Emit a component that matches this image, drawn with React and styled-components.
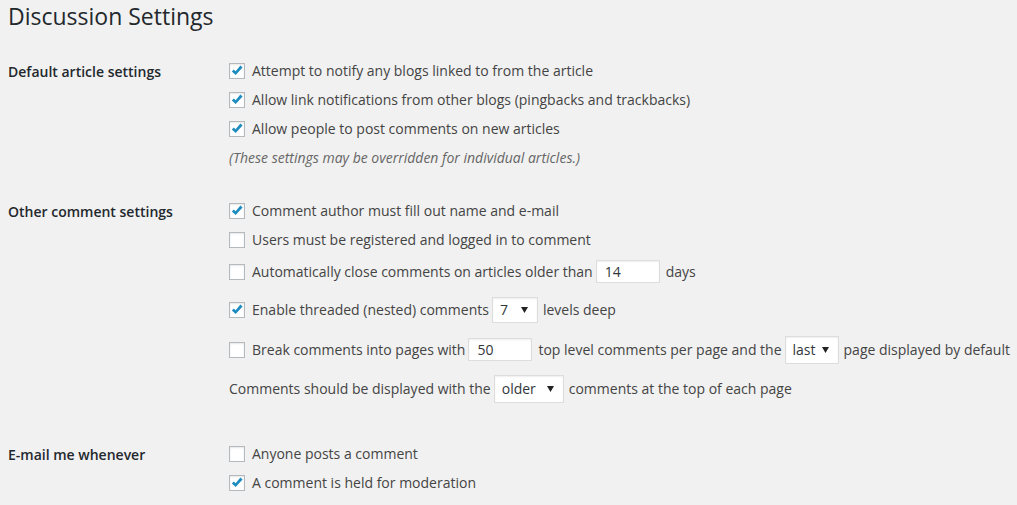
import React from "react";
import styled, { createGlobalStyle } from "styled-components";

const GlobalStyle = createGlobalStyle`
  html, body {
    margin: 0;
    padding: 0;
    background: #f1f1f1;
  }
  body {
    font-family: "Open Sans", "Liberation Sans", sans-serif;
    font-size: 14px;
    color: #444;
  }
`;

const Wrap = styled.div`
  padding: 0 8px;
  width: 1017px;
  box-sizing: border-box;
`;

const Title = styled.h1`
  margin: 0;
  padding: 2px 0 0;
  font-size: 23px;
  font-weight: 400;
  line-height: 29px;
  color: #23282d;
`;

const Section = styled.div`
  display: grid;
  grid-template-columns: 221px 1fr;
  margin-top: ${(p) => p.top}px;
`;

const Heading = styled.div`
  font-weight: 600;
  color: #23282d;
  line-height: 29px;
  padding-top: 1px;
`;

const Fields = styled.div`
  display: flex;
  flex-direction: column;
`;

const Row = styled.div`
  display: flex;
  align-items: center;
  height: ${(p) => p.h || 29}px;
  white-space: nowrap;
  gap: 3px;
`;

const Note = styled(Row)`
  font-style: italic;
  color: #666;
`;

const Box = styled.span`
  width: 16px;
  height: 16px;
  box-sizing: border-box;
  border: 1px solid #b4b9be;
  background: #fff;
  box-shadow: inset 0 1px 2px rgba(0, 0, 0, 0.1);
  display: inline-flex;
  align-items: center;
  justify-content: center;
  margin: 0 4px 0 0;
  flex: none;
`;

const TextInput = styled.span`
  display: inline-flex;
  align-items: center;
  box-sizing: border-box;
  width: 64px;
  height: 23px;
  padding: 0 8px;
  margin-right: 3px;
  background: #fff;
  border: 1px solid #ddd;
  box-shadow: inset 0 1px 2px rgba(0, 0, 0, 0.07);
  color: #32373c;
`;

const Select = styled.span`
  display: inline-flex;
  align-items: center;
  justify-content: space-between;
  box-sizing: border-box;
  width: ${(p) => p.w}px;
  height: ${(p) => p.h || 28}px;
  padding: 0 9px 0 7px;
  margin-right: 2px;
  background: #fff;
  border: 1px solid #ddd;
  box-shadow: inset 0 1px 2px rgba(0, 0, 0, 0.07);
  color: #32373c;
`;

const Arrow = styled.svg`
  width: 7px;
  height: 6px;
  flex: none;
`;

const Check = ({ on }) => (
  <Box>
    {on && (
      <svg width="14" height="14" viewBox="0 0 14 14">
        <path
          d="M1.8 7.4 L3.8 5.4 L5.6 7.3 L10.4 1.6 L12.6 3.4 L5.7 11 Z"
          fill="#1e8cbe"
        />
      </svg>
    )}
  </Box>
);

const Dropdown = ({ value, w, h }) => (
  <Select w={w} h={h}>
    <span>{value}</span>
    <Arrow viewBox="0 0 7 6">
      <path d="M0 0 H7 L3.5 6 Z" fill="#222" />
    </Arrow>
  </Select>
);

const Option = ({ on, children, h }) => (
  <Row h={h}>
    <Check on={on} />
    {children}
  </Row>
);

export default function App() {
  return (
    <>
      <GlobalStyle />
      <Wrap>
        <Title>Discussion Settings</Title>

        <Section top={25}>
          <Heading>Default article settings</Heading>
          <Fields>
            <Option on>Attempt to notify any blogs linked to from the article</Option>
            <Option on>Allow link notifications from other blogs (pingbacks and trackbacks)</Option>
            <Option on>Allow people to post comments on new articles</Option>
            <Note>(These settings may be overridden for individual articles.)</Note>
          </Fields>
        </Section>

        <Section top={24}>
          <Heading>Other comment settings</Heading>
          <Fields>
            <Option on>Comment author must fill out name and e-mail</Option>
            <Option>Users must be registered and logged in to comment</Option>
            <Option h={35}>
              Automatically close comments on articles older than
              <TextInput>14</TextInput>
              days
            </Option>
            <Option on h={41}>
              Enable threaded (nested) comments
              <Dropdown value="7" w={46} h={26} />
              levels deep
            </Option>
            <Option h={39}>
              Break comments into pages with
              <TextInput>50</TextInput>
              top level comments per page and the
              <Dropdown value="last" w={54} />
              page displayed by default
            </Option>
            <Row h={39}>
              Comments should be displayed with the
              <Dropdown value="older" w={70} />
              comments at the top of each page
            </Row>
          </Fields>
        </Section>

        <Section top={31}>
          <Heading>E-mail me whenever</Heading>
          <Fields>
            <Option>Anyone posts a comment</Option>
            <Option on>A comment is held for moderation</Option>
          </Fields>
        </Section>
      </Wrap>
    </>
  );
}
